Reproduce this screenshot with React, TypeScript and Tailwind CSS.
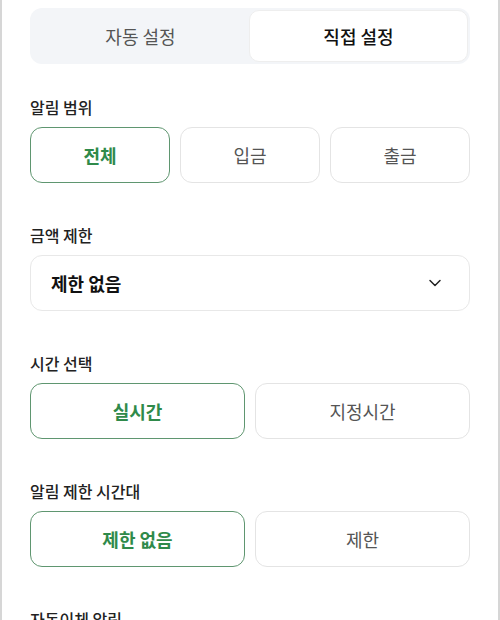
import { ChevronDown } from "lucide-react";

const font = { fontFamily: '"Noto Sans CJK KR", "Noto Sans", sans-serif' };

function Option({ label, active }: { label: string; active?: boolean }) {
  return (
    <button
      className={
        "flex h-14 flex-1 items-center justify-center rounded-xl border bg-white text-[18px] " +
        (active
          ? "border-[#5f9670] font-bold text-[#2f8a4a]"
          : "border-[#e4e4e4] text-[#555555]")
      }
    >
      {label}
    </button>
  );
}

function Section({ title, children }: { title: string; children: React.ReactNode }) {
  return (
    <div className="mb-10">
      <p className="mb-2 text-[16px] leading-6 font-medium text-[#222222]">{title}</p>
      {children}
    </div>
  );
}

export default function App() {
  return (
    <div
      className="min-h-[620px] w-[500px] border-x-2 border-[#d6d6d6] bg-white px-[28px] pt-2"
      style={font}
    >
      {/* ── Mode toggle ───────────────────────────────── */}
      <div className="mb-[31px] flex h-14 rounded-xl bg-[#f3f5f8] p-[2px]">
        <div className="flex flex-1 items-center justify-center text-[18px] text-[#555555]">
          자동 설정
        </div>
        <div className="flex flex-1 items-center justify-center rounded-[10px] border border-[#eeeeee] bg-white text-[18px] font-medium text-[#111111]">
          직접 설정
        </div>
      </div>

      <Section title="알림 범위">
        <div className="flex gap-[10px]">
          <Option label="전체" active />
          <Option label="입금" />
          <Option label="출금" />
        </div>
      </Section>

      <Section title="금액 제한">
        <div className="flex h-14 items-center justify-between rounded-xl border border-[#e8e8e8] bg-white pr-6 pl-5">
          <span className="text-[18px] font-bold text-[#111111]">제한 없음</span>
          <ChevronDown size={20} strokeWidth={1.8} className="text-[#222222]" />
        </div>
      </Section>

      <Section title="시간 선택">
        <div className="flex gap-[10px]">
          <Option label="실시간" active />
          <Option label="지정시간" />
        </div>
      </Section>

      <Section title="알림 제한 시간대">
        <div className="flex gap-[10px]">
          <Option label="제한 없음" active />
          <Option label="제한" />
        </div>
      </Section>

      <Section title="자동이체 알림">
        <div className="h-14" />
      </Section>
    </div>
  );
}
